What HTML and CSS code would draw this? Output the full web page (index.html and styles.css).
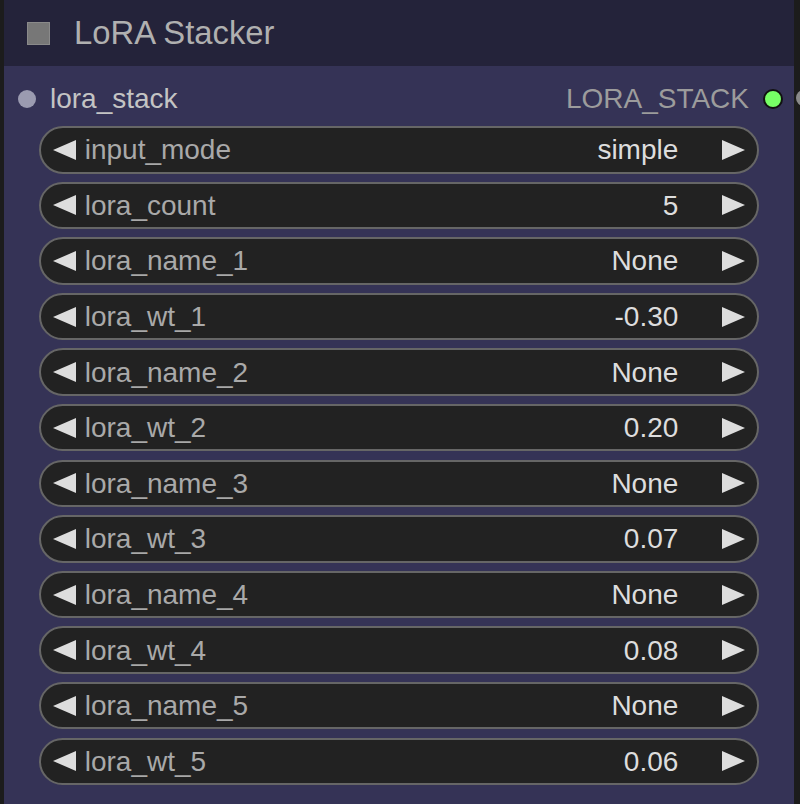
FILE: index.html
```html
<!DOCTYPE html>
<html lang="en">
<head>
  <meta charset="UTF-8" />
  <title>LoRA Stacker</title>
  <link rel="stylesheet" href="styles.css">
</head>
<body>
  <div class="node">
    <div class="title">
      <span class="box"></span>
      <span class="title-text">LoRA Stacker</span>
    </div>

    <div class="slots">
      <div class="slot">
        <span class="dot in"></span>
        <span class="slot-name">lora_stack</span>
      </div>
      <div class="slot">
        <span class="slot-type">LORA_STACK</span>
        <span class="dot out"></span>
      </div>
    </div>
    <span class="link-end"></span>

    <div class="widgets">
      <div class="widget">
        <svg class="arrow" viewBox="0 0 23 20"><polygon points="23,0 23,20 0,10"/></svg>
        <span class="label">input_mode</span>
        <span class="value">simple</span>
        <svg class="arrow" viewBox="0 0 23 20"><polygon points="0,0 0,20 23,10"/></svg>
      </div>
      <div class="widget">
        <svg class="arrow" viewBox="0 0 23 20"><polygon points="23,0 23,20 0,10"/></svg>
        <span class="label">lora_count</span>
        <span class="value">5</span>
        <svg class="arrow" viewBox="0 0 23 20"><polygon points="0,0 0,20 23,10"/></svg>
      </div>
      <div class="widget">
        <svg class="arrow" viewBox="0 0 23 20"><polygon points="23,0 23,20 0,10"/></svg>
        <span class="label">lora_name_1</span>
        <span class="value">None</span>
        <svg class="arrow" viewBox="0 0 23 20"><polygon points="0,0 0,20 23,10"/></svg>
      </div>
      <div class="widget">
        <svg class="arrow" viewBox="0 0 23 20"><polygon points="23,0 23,20 0,10"/></svg>
        <span class="label">lora_wt_1</span>
        <span class="value">-0.30</span>
        <svg class="arrow" viewBox="0 0 23 20"><polygon points="0,0 0,20 23,10"/></svg>
      </div>
      <div class="widget">
        <svg class="arrow" viewBox="0 0 23 20"><polygon points="23,0 23,20 0,10"/></svg>
        <span class="label">lora_name_2</span>
        <span class="value">None</span>
        <svg class="arrow" viewBox="0 0 23 20"><polygon points="0,0 0,20 23,10"/></svg>
      </div>
      <div class="widget">
        <svg class="arrow" viewBox="0 0 23 20"><polygon points="23,0 23,20 0,10"/></svg>
        <span class="label">lora_wt_2</span>
        <span class="value">0.20</span>
        <svg class="arrow" viewBox="0 0 23 20"><polygon points="0,0 0,20 23,10"/></svg>
      </div>
      <div class="widget">
        <svg class="arrow" viewBox="0 0 23 20"><polygon points="23,0 23,20 0,10"/></svg>
        <span class="label">lora_name_3</span>
        <span class="value">None</span>
        <svg class="arrow" viewBox="0 0 23 20"><polygon points="0,0 0,20 23,10"/></svg>
      </div>
      <div class="widget">
        <svg class="arrow" viewBox="0 0 23 20"><polygon points="23,0 23,20 0,10"/></svg>
        <span class="label">lora_wt_3</span>
        <span class="value">0.07</span>
        <svg class="arrow" viewBox="0 0 23 20"><polygon points="0,0 0,20 23,10"/></svg>
      </div>
      <div class="widget">
        <svg class="arrow" viewBox="0 0 23 20"><polygon points="23,0 23,20 0,10"/></svg>
        <span class="label">lora_name_4</span>
        <span class="value">None</span>
        <svg class="arrow" viewBox="0 0 23 20"><polygon points="0,0 0,20 23,10"/></svg>
      </div>
      <div class="widget">
        <svg class="arrow" viewBox="0 0 23 20"><polygon points="23,0 23,20 0,10"/></svg>
        <span class="label">lora_wt_4</span>
        <span class="value">0.08</span>
        <svg class="arrow" viewBox="0 0 23 20"><polygon points="0,0 0,20 23,10"/></svg>
      </div>
      <div class="widget">
        <svg class="arrow" viewBox="0 0 23 20"><polygon points="23,0 23,20 0,10"/></svg>
        <span class="label">lora_name_5</span>
        <span class="value">None</span>
        <svg class="arrow" viewBox="0 0 23 20"><polygon points="0,0 0,20 23,10"/></svg>
      </div>
      <div class="widget">
        <svg class="arrow" viewBox="0 0 23 20"><polygon points="23,0 23,20 0,10"/></svg>
        <span class="label">lora_wt_5</span>
        <span class="value">0.06</span>
        <svg class="arrow" viewBox="0 0 23 20"><polygon points="0,0 0,20 23,10"/></svg>
      </div>
    </div>
  </div>
</body>
</html>
```

FILE: styles.css
```css
body {
  margin: 0;
  background: #1c1c1c;
  font-family: 'Liberation Sans', Arial, sans-serif;
  overflow: hidden;
  height: 804px;
}

.node {
  position: relative;
  margin-left: 4px;
  width: 790px;
  height: 820px;
  background: #353356;
}

.title {
  height: 66px;
  background: #24233a;
  display: flex;
  align-items: center;
  padding-left: 23px;
  box-sizing: border-box;
}

.box {
  width: 23px;
  height: 23px;
  box-sizing: border-box;
  background: #777777;
  border: 1px solid #8a8a8a;
  margin-top: 1px;
}

.title-text {
  font-size: 32.8px;
  color: #b0b0b0;
  margin-left: 24px;
}

.slots {
  height: 60px;
  padding: 5px 0 0;
  box-sizing: border-box;
  display: flex;
  justify-content: space-between;
  align-items: center;
}

.slot {
  display: flex;
  align-items: center;
  font-size: 28px;
}

.dot {
  width: 18px;
  height: 18px;
  border-radius: 50%;
  box-sizing: border-box;
}

.dot.in {
  background: #9b9bb0;
  margin-left: 14px;
  margin-right: 14px;
}

.dot.out {
  width: 20px;
  height: 20px;
  background: #77ff66;
  border: 2px solid #111;
  margin-left: 14px;
  margin-right: 11px;
}

.slot-name {
  color: #c4c4c4;
}

.slot-type {
  color: #9c9c9c;
}

.link-end {
  position: absolute;
  left: 792px;
  top: 90px;
  width: 16px;
  height: 16px;
  border-radius: 50%;
  background: #8a8a8a;
}

.widgets {
  display: flex;
  flex-direction: column;
  gap: 8.1px;
  padding: 0 34.7px;
}

.widget {
  height: 47.5px;
  box-sizing: border-box;
  border: 2px solid #666666;
  border-radius: 24px;
  background: #222222;
  display: flex;
  align-items: center;
  padding: 1px 12px 0;
  font-size: 28px;
}

.arrow {
  width: 23px;
  height: 20px;
  fill: #dddddd;
  flex: none;
  margin-top: -1px;
}

.label {
  color: #a9a9a9;
  margin-left: 9px;
  flex: 1;
}

.value {
  color: #dddddd;
  margin-right: 44px;
}
```
